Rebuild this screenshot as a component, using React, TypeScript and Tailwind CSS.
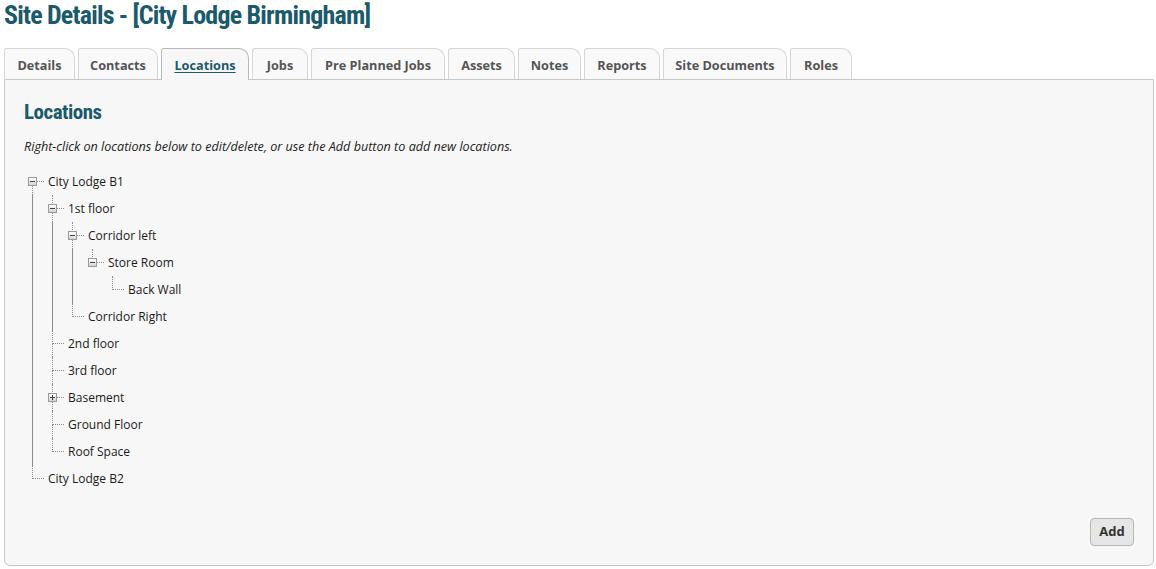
import React from "react";

type TNode = { label: string; children?: TNode[]; expanded?: boolean };

const tree: TNode[] = [
  {
    label: "City Lodge B1",
    expanded: true,
    children: [
      {
        label: "1st floor",
        expanded: true,
        children: [
          {
            label: "Corridor left",
            expanded: true,
            children: [
              { label: "Store Room", expanded: true, children: [{ label: "Back Wall" }] },
            ],
          },
          { label: "Corridor Right" },
        ],
      },
      { label: "2nd floor" },
      { label: "3rd floor" },
      { label: "Basement", expanded: false, children: [{ label: "Boiler Room" }] },
      { label: "Ground Floor" },
      { label: "Roof Space" },
    ],
  },
  { label: "City Lodge B2" },
];

const tabs: [string, number][] = [
  ["Details", 71],
  ["Contacts", 80],
  ["Locations", 88],
  ["Jobs", 56],
  ["Pre Planned Jobs", 134],
  ["Assets", 67],
  ["Notes", 63],
  ["Reports", 76],
  ["Site Documents", 124],
  ["Roles", 62],
];

function Expander({ open }: { open: boolean }) {
  return (
    <div className="absolute left-[6px] top-[9px] w-[9px] h-[9px] border border-[#9a9a9a] bg-gradient-to-b from-[#ffffff] to-[#d4d4d4] flex items-center justify-center">
      <div className="relative w-[5px] h-[5px]">
        <div className="absolute left-0 top-[2px] w-[5px] h-px bg-[#444]" />
        {!open && <div className="absolute left-[2px] top-0 w-px h-[5px] bg-[#444]" />}
      </div>
    </div>
  );
}

function TreeNode({ node, isLast, isFirstRoot }: { node: TNode; isLast: boolean; isFirstRoot: boolean }) {
  const hasKids = !!node.children && node.children.length > 0;
  const open = hasKids && !!node.expanded;
  return (
    <li className="relative">
      <div className="relative flex h-[27px] items-center">
        <div className="relative w-[20px] h-full shrink-0">
          {!isFirstRoot && (
            <div className="absolute left-[10px] top-0 h-[14px] border-l border-dotted border-[#8c8c8c]" />
          )}
          {!isLast && (
            <div className="absolute left-[10px] top-[13px] bottom-0 border-l border-dotted border-[#8c8c8c]" />
          )}
          <div className="absolute left-[10px] top-[13px] w-[12px] border-t border-dotted border-[#8c8c8c]" />
          {hasKids && <Expander open={open} />}
        </div>
        <span className="pl-[6px] text-[12px] text-[#1a1a1a] leading-[27px] whitespace-nowrap">{node.label}</span>
      </div>
      {open && (
        <ul className="relative pl-[20px]">
          {!isLast && <div className="absolute left-[10px] top-0 bottom-0 border-l border-[#8c8c8c]" />}
          {node.children!.map((c, i) => (
            <TreeNode key={c.label} node={c} isLast={i === node.children!.length - 1} isFirstRoot={false} />
          ))}
        </ul>
      )}
    </li>
  );
}

export default function App() {
  const body = { fontFamily: '"Open Sans", "Noto Sans", sans-serif' };
  const head = { fontFamily: '"Liberation Sans Narrow", "Roboto Condensed", "Roboto", sans-serif' };
  return (
    <div className="w-[1156px] h-[569px] bg-white px-[4px] overflow-hidden" style={body}>
      <h1
        className="h-[32px] leading-[30px] text-[26px] tracking-[-0.8px] font-bold text-[#1b5a6b] whitespace-nowrap"
        style={head}
      >
        Site Details - [City Lodge Birmingham]
      </h1>
      <div className="mt-[16px] flex gap-[3px] h-[32px] relative z-10">
        {tabs.map(([t, w]) => {
          const active = t === "Locations";
          return (
            <div
              key={t}
              style={{ width: w }}
              className={
                active
                  ? "h-[32px] rounded-tl-[3px] rounded-tr-[10px] border border-b-0 border-[#b8b8b8] bg-[#f7f7f7] flex items-center justify-center pt-[3px]"
                  : "h-[31px] rounded-tl-[3px] rounded-tr-[10px] border border-b-0 border-[#d6d6d6] bg-[#f9f9f9] flex items-center justify-center pt-[3px]"
              }
            >
              <span
                className={
                  active
                    ? "text-[12.7px] font-bold text-[#1b5a6b] underline underline-offset-2 whitespace-nowrap"
                    : "text-[12.7px] font-bold text-[#555] whitespace-nowrap"
                }
              >
                {t}
              </span>
            </div>
          );
        })}
      </div>
      <div className="-mt-px w-[1150px] h-[487px] border border-[#c8c8c8] rounded-b-[6px] bg-[#f7f7f7] px-[19px] pt-[20px] pb-[19px] flex flex-col">
        <h2 className="h-[26px] leading-[24px] text-[21px] tracking-[-0.5px] font-bold text-[#1b5a6b]" style={head}>
          Locations
        </h2>
        <p className="mt-[12px] h-[18px] leading-[18px] text-[12.6px] italic text-[#222] whitespace-nowrap">
          Right-click on locations below to edit/delete, or use the Add button to add new locations.
        </p>
        <ul className="mt-[12px] ml-[-2px]">
          {tree.map((n, i) => (
            <TreeNode key={n.label} node={n} isLast={i === tree.length - 1} isFirstRoot={i === 0} />
          ))}
        </ul>
        <div className="mt-auto flex justify-end">
          <button className="w-[44px] h-[28px] border border-[#b5b5b5] rounded-[4px] bg-[#e6e6e6] text-[13px] font-bold text-[#333]">
            Add
          </button>
        </div>
      </div>
    </div>
  );
}
